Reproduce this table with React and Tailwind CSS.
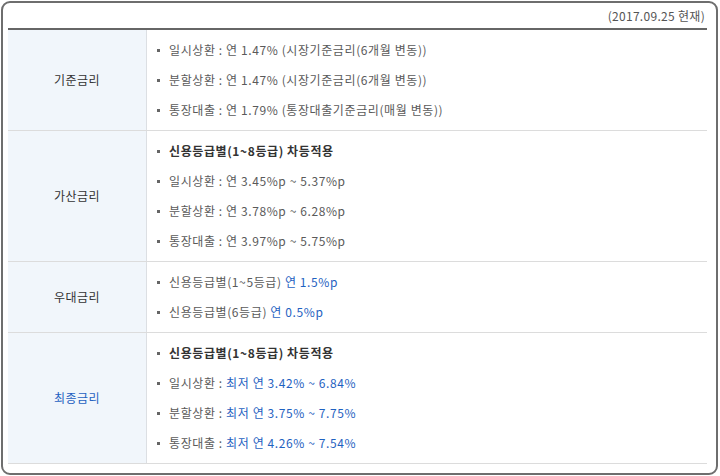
const rows = [
  {
    label: "기준금리",
    blue: false,
    lines: [
      [{ t: "일시상환 : 연 1.47% (시장기준금리(6개월 변동))" }],
      [{ t: "분할상환 : 연 1.47% (시장기준금리(6개월 변동))" }],
      [{ t: "통장대출 : 연 1.79% (통장대출기준금리(매월 변동))" }],
    ],
  },
  {
    label: "가산금리",
    blue: false,
    lines: [
      [{ t: "신용등급별(1~8등급) 차등적용", b: true }],
      [{ t: "일시상환 : 연 3.45%p ~ 5.37%p" }],
      [{ t: "분할상환 : 연 3.78%p ~ 6.28%p" }],
      [{ t: "통장대출 : 연 3.97%p ~ 5.75%p" }],
    ],
  },
  {
    label: "우대금리",
    blue: false,
    lines: [
      [{ t: "신용등급별(1~5등급) " }, { t: "연 1.5%p", c: true }],
      [{ t: "신용등급별(6등급) " }, { t: "연 0.5%p", c: true }],
    ],
  },
  {
    label: "최종금리",
    blue: true,
    lines: [
      [{ t: "신용등급별(1~8등급) 차등적용", b: true }],
      [{ t: "일시상환 : " }, { t: "최저 연 3.42% ~ 6.84%", c: true }],
      [{ t: "분할상환 : " }, { t: "최저 연 3.75% ~ 7.75%", c: true }],
      [{ t: "통장대출 : " }, { t: "최저 연 4.26% ~ 7.54%", c: true }],
    ],
  },
];

export default function App() {
  return (
    <div className="w-[720px] h-[476px] bg-white pt-px pl-px font-['Noto_Sans_CJK_KR',sans-serif] text-[12px]">
      <div className="w-[717px] h-[474px] border-2 border-[#6e6e6e] rounded-[9px] pl-[5px]">
        <div className="w-[699px] h-[25px] flex items-center justify-end pr-[2px] text-[#555] tracking-[0.3px]">
          (2017.09.25 현재)
        </div>
        <div className="w-[699px] border-t-2 border-[#666]">
          {rows.map((row) => (
            <div key={row.label} className="flex border-b border-[#dcdcdc]">
              <div
                className={
                  "w-[139px] shrink-0 bg-[#f1f6fb] border-r border-[#dcdfe3] flex items-center justify-center tracking-[0.5px] " +
                  (row.blue ? "text-[#1f62c1]" : "text-[#333]")
                }
              >
                {row.label}
              </div>
              <div className="flex-1 py-[5px] pl-[10px]">
                {row.lines.map((line, i) => (
                  <div key={i} className="h-[30px] flex items-center">
                    <span className="w-[3px] h-[3px] bg-[#666] mr-[9px]" />
                    <span
                      className={
                        "tracking-[0.6px] whitespace-pre " +
                        (line[0].b ? "font-bold text-[#333]" : "text-[#5a5a5a]")
                      }
                    >
                      {line.map((seg, j) => (
                        <span key={j} className={seg.c ? "text-[#1f62c1]" : ""}>
                          {seg.t}
                        </span>
                      ))}
                    </span>
                  </div>
                ))}
              </div>
            </div>
          ))}
        </div>
      </div>
    </div>
  );
}
